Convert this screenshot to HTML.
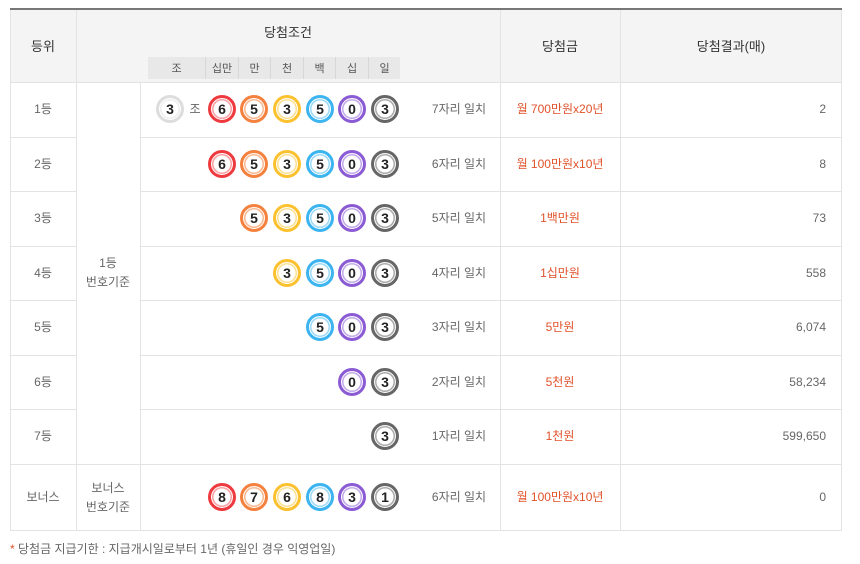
<!DOCTYPE html>
<html><head><meta charset="utf-8"><style>
*{margin:0;padding:0;box-sizing:border-box}
body{width:860px;height:564px;background:#fff;font-family:"Liberation Sans","Noto Sans CJK KR",sans-serif;color:#666;font-size:12px;position:relative;overflow:hidden}
.a{position:absolute}
.c{position:absolute;display:flex;align-items:center;justify-content:center;text-align:center;line-height:19px}
.h{background:#f4f4f4}
.ln{position:absolute;background:#e3e3e3}
.b{position:absolute;width:28px;height:28px;border-radius:50%;border:3px solid;background:#fff;display:flex;align-items:center;justify-content:center;font-weight:bold;font-size:14px;color:#222}
.r{border-color:#ee3a3f;box-shadow:inset 0 0 0 1px #fff,inset 0 0 0 2.5px #f8a0a2}
.o{border-color:#f4813e;box-shadow:inset 0 0 0 1px #fff,inset 0 0 0 2.5px #f9b88f}
.y{border-color:#fbc12f;box-shadow:inset 0 0 0 1px #fff,inset 0 0 0 2.5px #fde08f}
.bl{border-color:#3cb4f0;box-shadow:inset 0 0 0 1px #fff,inset 0 0 0 2.5px #9dd9f7}
.p{border-color:#8a5bd4;box-shadow:inset 0 0 0 1px #fff,inset 0 0 0 2.5px #c2a9ea}
.g{border-color:#666;box-shadow:inset 0 0 0 1px #fff,inset 0 0 0 2.5px #aaa}
.w{border-color:#ddd;box-shadow:inset 0 0 0 1px #fff,inset 0 0 0 2.5px #eee}
.m{color:#e0522a}
.sh{position:absolute;top:57px;height:22px;background:#e8e8e8;border-right:1px solid #d8d8d8;display:flex;align-items:center;justify-content:center;font-size:11px;color:#555}
</style></head><body>
<div class="a" style="left:10px;top:8px;width:832px;height:2px;background:#777"></div>
<div class="a h" style="left:10px;top:10px;width:832px;height:72px"></div>
<div class="a" style="left:10px;top:10px;width:832px;height:521px;border:1px solid #e3e3e3;border-top:none"></div>
<!-- vertical lines -->
<div class="ln" style="left:76px;top:10px;width:1px;height:521px"></div>
<div class="ln" style="left:140px;top:82px;width:1px;height:449px"></div>
<div class="ln" style="left:500px;top:10px;width:1px;height:521px"></div>
<div class="ln" style="left:620px;top:10px;width:1px;height:521px"></div>
<!-- horizontal lines -->
<div class="ln" style="left:10px;top:82px;width:832px;height:1px"></div>
<div class="ln" style="left:10px;top:137px;width:66px;height:1px"></div><div class="ln" style="left:140px;top:137px;width:702px;height:1px"></div>
<div class="ln" style="left:10px;top:191px;width:66px;height:1px"></div><div class="ln" style="left:140px;top:191px;width:702px;height:1px"></div>
<div class="ln" style="left:10px;top:246px;width:66px;height:1px"></div><div class="ln" style="left:140px;top:246px;width:702px;height:1px"></div>
<div class="ln" style="left:10px;top:300px;width:66px;height:1px"></div><div class="ln" style="left:140px;top:300px;width:702px;height:1px"></div>
<div class="ln" style="left:10px;top:355px;width:66px;height:1px"></div><div class="ln" style="left:140px;top:355px;width:702px;height:1px"></div>
<div class="ln" style="left:10px;top:409px;width:66px;height:1px"></div><div class="ln" style="left:140px;top:409px;width:702px;height:1px"></div>
<div class="ln" style="left:10px;top:464px;width:832px;height:1px"></div>
<!-- header text -->
<div class="c" style="left:10px;top:10px;width:66px;height:72px;color:#333;font-size:13px">등위</div>
<div class="c" style="left:76px;top:22px;width:424px;height:20px;color:#333;font-size:13px">당첨조건</div>
<div class="c" style="left:500px;top:10px;width:120px;height:72px;color:#333;font-size:13px">당첨금</div>
<div class="c" style="left:620px;top:10px;width:222px;height:72px;color:#333;font-size:13px">당첨결과(매)</div>
<div class="sh" style="left:148px;width:58px">조</div>
<div class="sh" style="left:206px;width:33px">십만</div>
<div class="sh" style="left:239px;width:32px">만</div>
<div class="sh" style="left:271px;width:33px">천</div>
<div class="sh" style="left:304px;width:32px">백</div>
<div class="sh" style="left:336px;width:33px">십</div>
<div class="sh" style="left:369px;width:31px;border-right:none">일</div>
<!-- rank col -->
<div class="c" style="left:10px;top:82px;width:66px;height:55px">1등</div>
<div class="c" style="left:10px;top:137px;width:66px;height:54px">2등</div>
<div class="c" style="left:10px;top:191px;width:66px;height:55px">3등</div>
<div class="c" style="left:10px;top:246px;width:66px;height:54px">4등</div>
<div class="c" style="left:10px;top:300px;width:66px;height:55px">5등</div>
<div class="c" style="left:10px;top:355px;width:66px;height:54px">6등</div>
<div class="c" style="left:10px;top:409px;width:66px;height:55px">7등</div>
<div class="c" style="left:10px;top:464px;width:66px;height:67px">보너스</div>
<div class="c" style="left:76px;top:82px;width:64px;height:382px">1등<br>번호기준</div>
<div class="c" style="left:76px;top:464px;width:64px;height:67px">보너스<br>번호기준</div>
<!-- balls row1 y center 109 -->
<div class="b w" style="left:156px;top:95px">3</div>
<div class="c" style="left:188px;top:99px;width:14px;height:20px">조</div>
<div class="b r" style="left:208px;top:95px">6</div><div class="b o" style="left:240px;top:95px">5</div><div class="b y" style="left:273px;top:95px">3</div><div class="b bl" style="left:306px;top:95px">5</div><div class="b p" style="left:338px;top:95px">0</div><div class="b g" style="left:371px;top:95px">3</div>
<!-- row2 -->
<div class="b r" style="left:208px;top:150px">6</div><div class="b o" style="left:240px;top:150px">5</div><div class="b y" style="left:273px;top:150px">3</div><div class="b bl" style="left:306px;top:150px">5</div><div class="b p" style="left:338px;top:150px">0</div><div class="b g" style="left:371px;top:150px">3</div>
<!-- row3 -->
<div class="b o" style="left:240px;top:204px">5</div><div class="b y" style="left:273px;top:204px">3</div><div class="b bl" style="left:306px;top:204px">5</div><div class="b p" style="left:338px;top:204px">0</div><div class="b g" style="left:371px;top:204px">3</div>
<!-- row4 -->
<div class="b y" style="left:273px;top:259px">3</div><div class="b bl" style="left:306px;top:259px">5</div><div class="b p" style="left:338px;top:259px">0</div><div class="b g" style="left:371px;top:259px">3</div>
<!-- row5 -->
<div class="b bl" style="left:306px;top:313px">5</div><div class="b p" style="left:338px;top:313px">0</div><div class="b g" style="left:371px;top:313px">3</div>
<!-- row6 -->
<div class="b p" style="left:338px;top:368px">0</div><div class="b g" style="left:371px;top:368px">3</div>
<!-- row7 -->
<div class="b g" style="left:371px;top:422px">3</div>
<!-- bonus -->
<div class="b r" style="left:208px;top:483px">8</div><div class="b o" style="left:240px;top:483px">7</div><div class="b y" style="left:273px;top:483px">6</div><div class="b bl" style="left:306px;top:483px">8</div><div class="b p" style="left:338px;top:483px">3</div><div class="b g" style="left:371px;top:483px">1</div>
<!-- match text -->
<div class="c" style="left:420px;top:82px;width:78px;height:55px">7자리 일치</div>
<div class="c" style="left:420px;top:137px;width:78px;height:54px">6자리 일치</div>
<div class="c" style="left:420px;top:191px;width:78px;height:55px">5자리 일치</div>
<div class="c" style="left:420px;top:246px;width:78px;height:54px">4자리 일치</div>
<div class="c" style="left:420px;top:300px;width:78px;height:55px">3자리 일치</div>
<div class="c" style="left:420px;top:355px;width:78px;height:54px">2자리 일치</div>
<div class="c" style="left:420px;top:409px;width:78px;height:55px">1자리 일치</div>
<div class="c" style="left:420px;top:464px;width:78px;height:67px">6자리 일치</div>
<!-- money -->
<div class="c m" style="left:500px;top:82px;width:120px;height:55px">월 700만원x20년</div>
<div class="c m" style="left:500px;top:137px;width:120px;height:54px">월 100만원x10년</div>
<div class="c m" style="left:500px;top:191px;width:120px;height:55px">1백만원</div>
<div class="c m" style="left:500px;top:246px;width:120px;height:54px">1십만원</div>
<div class="c m" style="left:500px;top:300px;width:120px;height:55px">5만원</div>
<div class="c m" style="left:500px;top:355px;width:120px;height:54px">5천원</div>
<div class="c m" style="left:500px;top:409px;width:120px;height:55px">1천원</div>
<div class="c m" style="left:500px;top:464px;width:120px;height:67px">월 100만원x10년</div>
<!-- results -->
<div class="c" style="left:620px;top:82px;width:206px;height:55px;justify-content:flex-end">2</div>
<div class="c" style="left:620px;top:137px;width:206px;height:54px;justify-content:flex-end">8</div>
<div class="c" style="left:620px;top:191px;width:206px;height:55px;justify-content:flex-end">73</div>
<div class="c" style="left:620px;top:246px;width:206px;height:54px;justify-content:flex-end">558</div>
<div class="c" style="left:620px;top:300px;width:206px;height:55px;justify-content:flex-end">6,074</div>
<div class="c" style="left:620px;top:355px;width:206px;height:54px;justify-content:flex-end">58,234</div>
<div class="c" style="left:620px;top:409px;width:206px;height:55px;justify-content:flex-end">599,650</div>
<div class="c" style="left:620px;top:464px;width:206px;height:67px;justify-content:flex-end">0</div>
<!-- footer -->
<div class="a" style="left:10px;top:540px;font-size:12px;color:#666;line-height:18px"><span style="color:#e0522a">*</span> 당첨금 지급기한 : 지급개시일로부터 1년 (휴일인 경우 익영업일)</div>
</body></html>
